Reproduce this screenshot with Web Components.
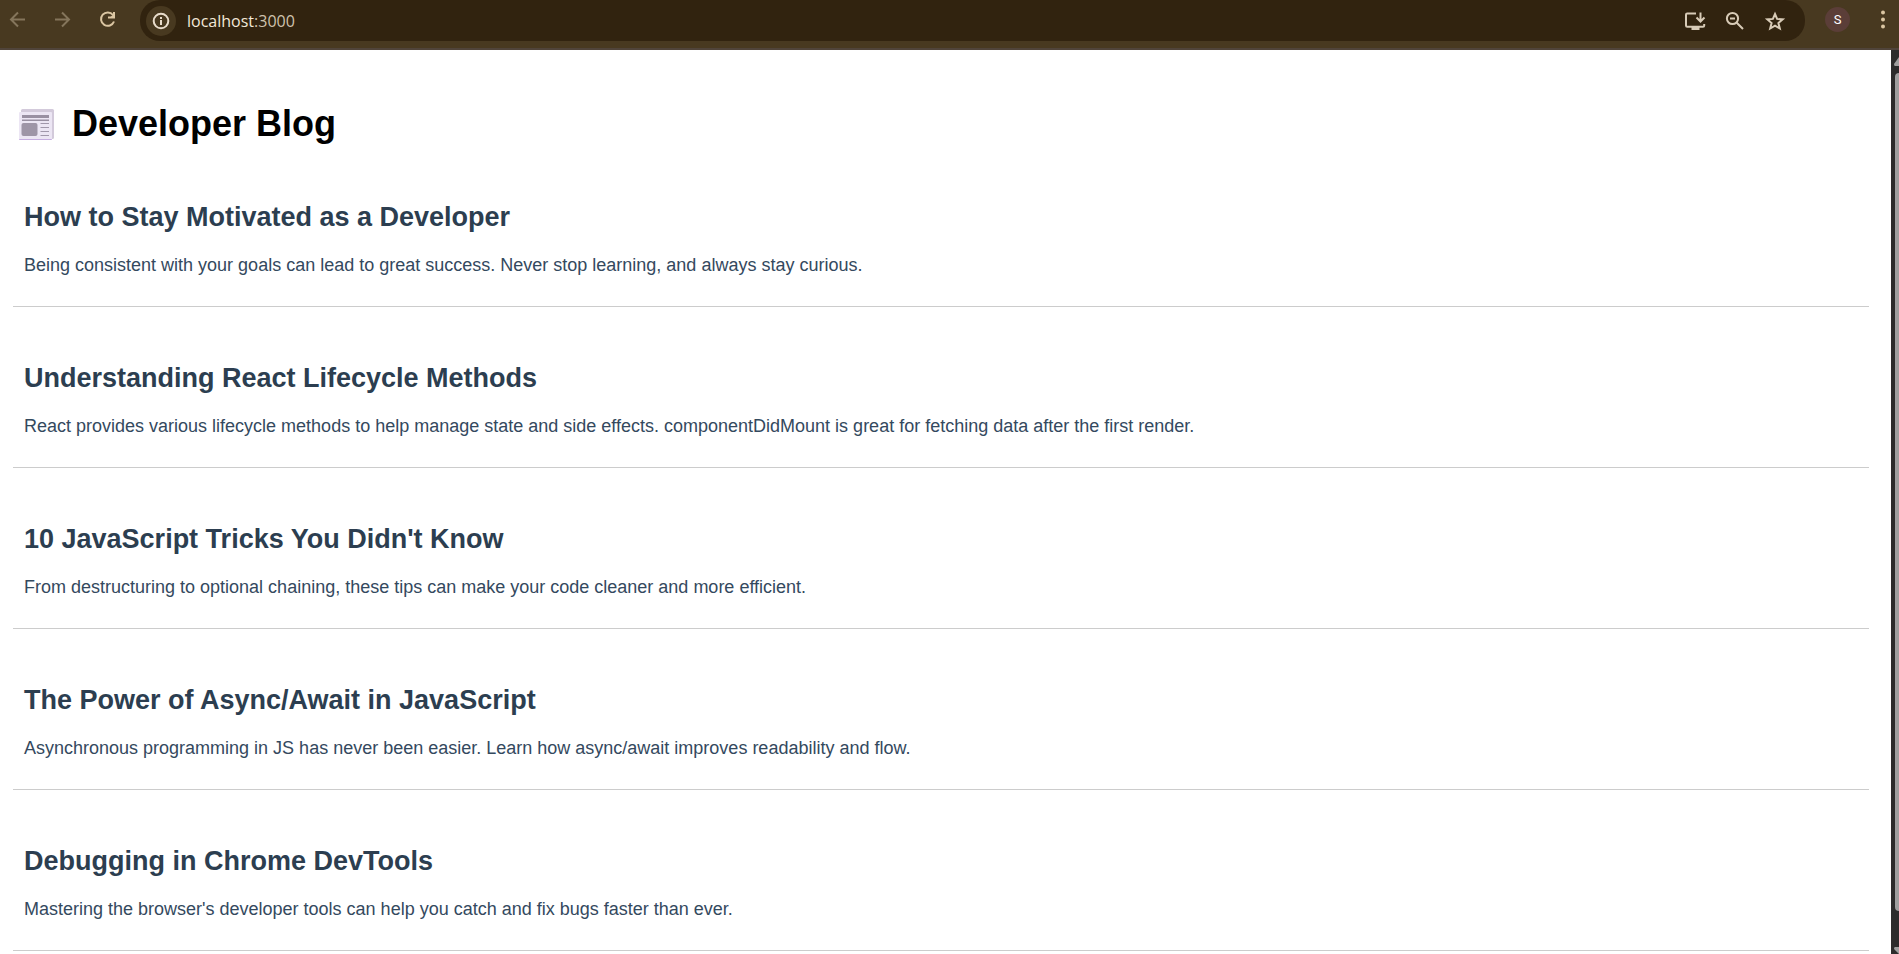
<!DOCTYPE html>
<html lang="en">
<head>
<meta charset="utf-8">
<title>Developer Blog</title>
<style>
  html, body { height: 100%; margin: 0; overflow: hidden; }
  body { font-family: "Liberation Sans", Arial, sans-serif; background: #fff; }
</style>
</head>
<body>
<browser-window>
  <browser-toolbar slot="toolbar" host="localhost" port=":3000" initial="S"></browser-toolbar>
  <blog-header>Developer Blog</blog-header>
  <blog-post><span slot="title">How to Stay Motivated as a Developer</span>Being consistent with your goals can lead to great success. Never stop learning, and always stay curious.</blog-post>
  <blog-post><span slot="title">Understanding React Lifecycle Methods</span>React provides various lifecycle methods to help manage state and side effects. componentDidMount is great for fetching data after the first render.</blog-post>
  <blog-post><span slot="title">10 JavaScript Tricks You Didn't Know</span>From destructuring to optional chaining, these tips can make your code cleaner and more efficient.</blog-post>
  <blog-post><span slot="title">The Power of Async/Await in JavaScript</span>Asynchronous programming in JS has never been easier. Learn how async/await improves readability and flow.</blog-post>
  <blog-post><span slot="title">Debugging in Chrome DevTools</span>Mastering the browser's developer tools can help you catch and fix bugs faster than ever.</blog-post>
</browser-window>

<script>
function define(name, markup, setup) {
  const template = document.createElement('template');
  template.innerHTML = markup;
  customElements.define(name, class extends HTMLElement {
    constructor() {
      super();
      this.attachShadow({ mode: 'open' }).append(template.content.cloneNode(true));
    }
    connectedCallback() { if (setup) setup(this, this.shadowRoot); }
  });
}

define('browser-window', `
  <style>
    :host { display: flex; flex-direction: column; height: 100vh; }
    .view { flex: 1; min-height: 0; display: flex; }
    main { flex: 1; min-width: 0; overflow: hidden; box-sizing: border-box; padding: 0 22px 0 13px; background: #fff; }
  </style>
  <slot name="toolbar"></slot>
  <div class="view">
    <main><slot></slot></main>
    <page-scrollbar></page-scrollbar>
  </div>`);

define('page-scrollbar', `
  <style>
    :host { display: flex; flex-direction: column; width: 8px; overflow: hidden; background: #2c2c2c; }
    svg { display: block; width: 14px; flex: none; fill: #9f9f9f; }
    .track { flex: 1; margin-left: 4px; width: 8px; }
    .thumb { height: 96%; border-radius: 4px; background: #9f9f9f; }
  </style>
  <svg height="23" viewBox="0 0 14 23"><path d="M3 14 8 7l5 7q0 2-1 2H4q-1 0-1-2z"/></svg>
  <div class="track"><div class="thumb"></div></div>
  <svg height="8" viewBox="0 0 14 8"><path d="M4 1h9q1 1 0 2L9 8H8L3 3q0-2 1-2z"/></svg>`);

define('browser-toolbar', `
  <style>
    :host { display: flex; align-items: flex-start; height: 48px; border-bottom: 2px solid #50443a; background: #483920; color: #dbc6a2; }
    button { display: grid; place-items: center; margin: 0; padding: 0; border: 0; background: none; color: inherit; font: inherit; }
    svg { display: block; width: 24px; height: 24px; fill: none; stroke: currentColor; stroke-width: 2; }
    .nav { display: flex; gap: 21px; padding: 8px 20px 0 6px; }
    .nav button { width: 24px; height: 24px; }
    .nav button:disabled { color: #84755b; }
    .box { flex: 1; min-width: 0; display: flex; align-items: center; box-sizing: border-box; height: 41px; padding: 0 18px 0 6px; border-radius: 20px; background: #31230f; color: #d8cbb7; }
    .info { width: 30px; height: 30px; border-radius: 50%; background: #483920; color: #e8dccb; }
    .address { flex: 1; display: flex; margin-left: 11px; font: 16px/24px "Open Sans", "Noto Sans", sans-serif; color: #cfc2ad; }
    .address b { font-weight: 400; color: #f3e8d8; }
    .tools { display: flex; gap: 16px; }
    .tools button { width: 24px; height: 24px; }
    .avatar { width: 25px; height: 25px; margin: 7px 0 0 20px; border-radius: 50%; background: #5b3e38; color: #fff; font: 13px/25px Roboto, sans-serif; }
    .more { width: 24px; height: 24px; margin: 7px 4px 0 21px; }
    .more svg { fill: currentColor; stroke: none; }
  </style>
  <nav class="nav">
    <button disabled aria-label="Back"><svg viewBox="0 0 24 24"><path d="M19 11.500H6M12 4.500 5 11.500l7 7"/></svg></button>
    <button disabled aria-label="Forward"><svg viewBox="0 0 24 24"><path d="M4 11.500h13M11 4.500l7 7-7 7"/></svg></button>
    <button aria-label="Reload"><svg viewBox="0 0 24 24"><path d="M17 7A6.700 6.700 0 1 0 18 13.500M18 4v5.500h-6"/><path d="M18.500 5v5h-5z" fill="currentColor" stroke="none"/></svg></button>
  </nav>
  <div class="box">
    <button class="info" aria-label="View site information"><svg viewBox="0 0 24 24"><circle cx="12" cy="12" r="7.300"/><path d="M12 11v5M12 8v2"/></svg></button>
    <div class="address"><b id="host"></b><span id="port"></span></div>
    <div class="tools">
      <button aria-label="Install app"><svg viewBox="0 0 24 24"><path d="M13 4.500H4.200q-1.200 0-1.200 1.200v10.800q0 1.200 1.200 1.200H20q1.200 0 1.200-1.200V15M17.500 3.500v8.500M13.500 8.500l4 4 4-4"/><path d="M8.500 18h8v3h-8z" fill="currentColor" stroke="none"/></svg></button>
      <button aria-label="Zoom"><svg viewBox="0 0 24 24"><circle cx="9.500" cy="9.500" r="5.600"/><path d="M13.500 13.500l6.500 6.500M7 9.500h5"/></svg></button>
      <button aria-label="Bookmark this tab"><svg viewBox="0 0 24 24"><path d="M12 5l2.100 4.900 5.600.5-4.300 3.600 1.400 5.500-4.800-2.900-4.800 2.900 1.400-5.500-4.300-3.600 5.600-.5z"/></svg></button>
    </div>
  </div>
  <button class="avatar" aria-label="Profile"></button>
  <button class="more" aria-label="Menu"><svg viewBox="0 0 24 24"><circle cx="12" cy="5.500" r="2"/><circle cx="12" cy="12.500" r="2"/><circle cx="12" cy="19.500" r="2"/></svg></button>`,
  (el, root) => {
    root.getElementById('host').textContent = el.getAttribute('host');
    root.getElementById('port').textContent = el.getAttribute('port');
    root.querySelector('.avatar').textContent = el.getAttribute('initial');
  });

define('blog-header', `
  <style>
    :host { display: block; padding: 53px 0 1px 6px; }
    h1 { display: flex; align-items: center; gap: 17px; margin: 0; font-size: 36px; line-height: 42px; color: #000; }
    svg { display: block; width: 36px; height: 32px; }
  </style>
  <h1>
    <svg viewBox="0 0 36 32" aria-hidden="true">
      <rect x="2" y="1" width="33" height="30" rx="1.500" fill="#d3cadb"/>
      <rect x="0" y="4" width="33" height="28" rx="1" fill="#ece6f4"/>
      <path d="M0 31h33q0 1-1 1H1q-1 0-1-1z" fill="#c5ade0"/>
      <path d="M3 7h27v3H3zM3 11.500h27v1.500H3z" fill="#9990a2"/>
      <rect x="2.500" y="15" width="16" height="13" rx="2" fill="#9e95a7"/>
      <path d="M21.500 15.500H30M21.500 19.500H30M21.500 23.500H30M21.500 27.500H30" stroke="#a198ab" stroke-width="1"/>
    </svg>
    <slot></slot>
  </h1>`);

define('blog-post', `
  <style>
    :host { display: block; }
    article { padding: 55px 11px 30px; border-bottom: 1px solid #ccc; }
    h2 { margin: 0 0 22px; font-size: 27px; line-height: 32px; color: #2c3e50; }
    p { margin: 0 0 1px; font-size: 18px; line-height: 20px; color: #34495e; }
  </style>
  <article>
    <h2><slot name="title"></slot></h2>
    <p><slot></slot></p>
  </article>`);
</script>
</body>
</html>
